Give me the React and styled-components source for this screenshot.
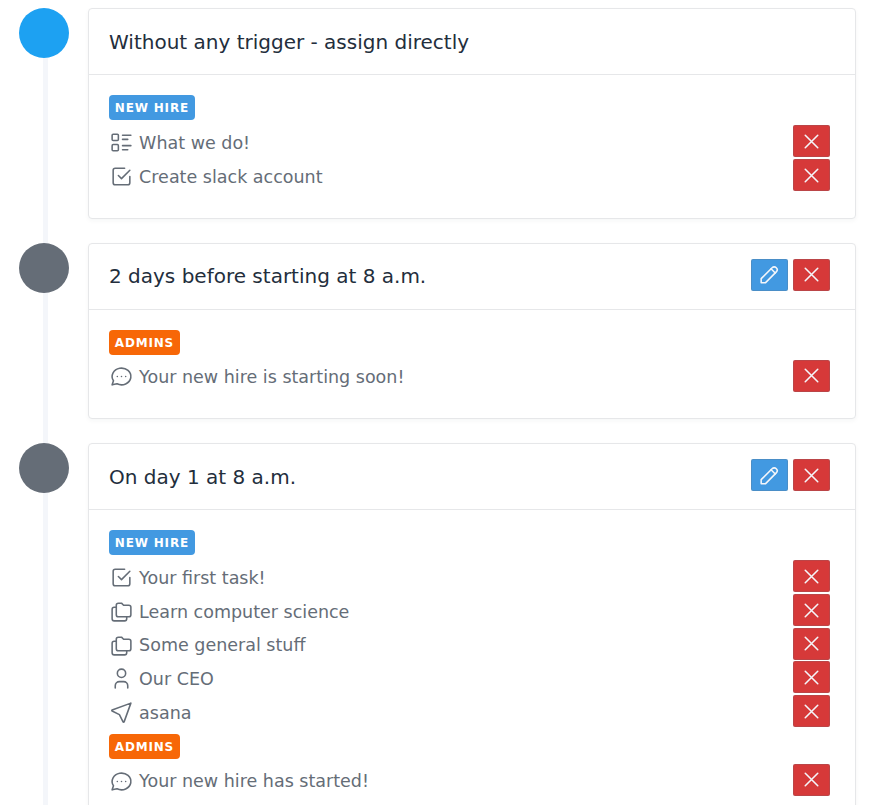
import React from 'react';
import styled, { createGlobalStyle } from 'styled-components';

const GlobalStyle = createGlobalStyle`
  *, *::before, *::after { box-sizing: border-box; }
  html { overflow: hidden; }
  body {
    margin: 0;
    background: #fff;
    font-family: "DejaVu Sans", sans-serif;
    color: #232e3c;
  }
`;

const Timeline = styled.main`
  height: 805px;
  padding: 8px 22px 0 19px;
  overflow: hidden;
`;

const Step = styled.section`
  display: grid;
  grid-template-columns: 50px 1fr;
  column-gap: 19px;
`;

const Rail = styled.div`
  display: flex;
  flex-direction: column;
  align-items: center;
`;

const Dot = styled.div`
  flex: none;
  width: 50px;
  height: 50px;
  border-radius: 50%;
  background: ${(p) => (p.$active ? '#1da1f2' : '#656d77')};
`;

const Line = styled.div`
  flex: 1;
  width: 5px;
  margin-left: 3px;
  background: #f4f6fa;
`;

const Card = styled.article`
  margin-bottom: ${(p) => p.$gap || 24}px;
  border: 1px solid #e6e7e9;
  border-radius: 4px;
  background: #fff;
  box-shadow: rgba(35, 46, 60, 0.04) 0 2px 4px 0;
`;

const CardHeader = styled.header`
  display: flex;
  align-items: center;
  justify-content: space-between;
  height: 66px;
  padding: 0 25px 0 20px;
  border-bottom: 1px solid #e6e7e9;
`;

const Title = styled.h3`
  margin: 0;
  padding-top: ${(p) => p.$drop || 0}px;
  padding-bottom: ${(p) => p.$lift || 0}px;
  font-size: 20px;
  line-height: 28px;
  font-weight: 400;
  white-space: nowrap;
`;

const Actions = styled.div`
  display: flex;
  gap: 5px;
  margin-bottom: 3px;
`;

const CardBody = styled.div`
  padding: 20px 25px 25.85px 20px;
`;

const Group = styled.div`
  & + & { margin-top: 5.9px; }
`;

const Badge = styled.div`
  width: max-content;
  height: 25px;
  margin-bottom: 4.25px;
  padding: 0 5.8px;
  border-radius: 4px;
  background: ${(p) => (p.$tone === 'orange' ? '#f76707' : '#4299e1')};
  color: #fff;
  font-size: 12px;
  line-height: 26px;
  font-weight: 700;
  letter-spacing: 0.82px;
`;

const Row = styled.div`
  display: flex;
  align-items: flex-start;
  justify-content: space-between;
  height: ${(p) => p.$height || 33.7}px;
  padding-top: 0.75px;
`;

const Glyph = styled.svg`
  flex: none;
  width: 25px;
  height: 25px;
  fill: none;
  stroke: currentColor;
  stroke-width: 1.5;
  stroke-linecap: round;
  stroke-linejoin: round;
`;

const Label = styled.div`
  display: flex;
  align-items: center;
  gap: 5.1px;
  height: 36px;
  color: #656d77;
  font-size: 17.5px;
  line-height: 25px;
  white-space: nowrap;

  ${Glyph} { margin-bottom: 1.4px; }
`;

const IconButton = styled.button`
  display: flex;
  align-items: center;
  justify-content: center;
  width: 37px;
  height: 32px;
  padding: 0;
  border: 1px solid rgba(101, 109, 119, 0.24);
  border-radius: 2px;
  background: ${(p) => (p.$tone === 'blue' ? '#4299e1' : '#d63939')};
  color: #f4f6fa;
`;

const shapes = {
  list: (
    <>
      <path d="M13 5h8M13 9h5M13 15h8M13 19h5" />
      <rect x="3" y="4" width="6" height="6" rx="1" />
      <rect x="3" y="14" width="6" height="6" rx="1" />
    </>
  ),
  check: (
    <>
      <path d="M9 11l3 3l8-8" />
      <path d="M20 12v6a2 2 0 0 1-2 2H6a2 2 0 0 1-2-2V6a2 2 0 0 1 2-2h9" />
    </>
  ),
  message: (
    <>
      <path d="M3 20l1.3-3.9a9 8 0 1 1 3.4 2.9L3 20" />
      <path d="M12 12v.01M8 12v.01M16 12v.01" />
    </>
  ),
  folders: (
    <>
      <path d="M9 4h3l2 2h5a2 2 0 0 1 2 2v7a2 2 0 0 1-2 2H9a2 2 0 0 1-2-2V6a2 2 0 0 1 2-2" />
      <path d="M17 17v2a2 2 0 0 1-2 2H5a2 2 0 0 1-2-2v-9a2 2 0 0 1 2-2h2" />
    </>
  ),
  user: (
    <>
      <circle cx="12" cy="7" r="4" />
      <path d="M6 21v-2a4 4 0 0 1 4-4h4a4 4 0 0 1 4 4v2" />
    </>
  ),
  location: <path d="M21 3l-6.5 18a.55.55 0 0 1-1 0L10 14l-7-3.5a.55.55 0 0 1 0-1L21 3" />,
  x: <path d="M18 6L6 18M6 6l12 12" />,
  pencil: (
    <>
      <path d="M4 20h4L18.5 9.5a1.5 1.5 0 0 0-4-4L4 16v4" />
      <path d="M13.5 6.5l4 4" />
    </>
  ),
};

const Icon = ({ name }) => (
  <Glyph viewBox="0 0 24 24" aria-hidden="true">{shapes[name]}</Glyph>
);

const RemoveButton = () => (
  <IconButton aria-label="Remove"><Icon name="x" /></IconButton>
);

const hire = 'NEW HIRE';
const admins = 'ADMINS';

const steps = [
  {
    title: 'Without any trigger - assign directly',
    active: true,
    gap: 23.5,
    rowHeight: 34,
    groups: [
      { badge: hire, items: [['list', 'What we do!'], ['check', 'Create slack account']] },
    ],
  },
  {
    title: '2 days before starting at 8 a.m.',
    lift: 0.5,
    groups: [{ badge: admins, items: [['message', 'Your new hire is starting soon!']] }],
  },
  {
    title: 'On day 1 at 8 a.m.',
    drop: 1,
    groups: [
      {
        badge: hire,
        items: [
          ['check', 'Your first task!'],
          ['folders', 'Learn computer science'],
          ['folders', 'Some general stuff'],
          ['user', 'Our CEO'],
          ['location', 'asana'],
        ],
      },
      { badge: admins, items: [['message', 'Your new hire has started!']] },
    ],
  },
];

export default function App() {
  return (
    <>
      <GlobalStyle />
      <Timeline>
        {steps.map((step) => (
          <Step key={step.title}>
            <Rail>
              <Dot $active={step.active} />
              <Line />
            </Rail>
            <Card $gap={step.gap}>
              <CardHeader>
                <Title $drop={step.drop} $lift={step.lift}>{step.title}</Title>
                {!step.active && (
                  <Actions>
                    <IconButton $tone="blue" aria-label="Edit"><Icon name="pencil" /></IconButton>
                    <RemoveButton />
                  </Actions>
                )}
              </CardHeader>
              <CardBody>
                {step.groups.map((group) => (
                  <Group key={group.badge}>
                    <Badge $tone={group.badge === admins ? 'orange' : 'blue'}>{group.badge}</Badge>
                    {group.items.map(([icon, text]) => (
                      <Row key={text} $height={step.rowHeight}>
                        <Label><Icon name={icon} />{text}</Label>
                        <RemoveButton />
                      </Row>
                    ))}
                  </Group>
                ))}
              </CardBody>
            </Card>
          </Step>
        ))}
      </Timeline>
    </>
  );
}
